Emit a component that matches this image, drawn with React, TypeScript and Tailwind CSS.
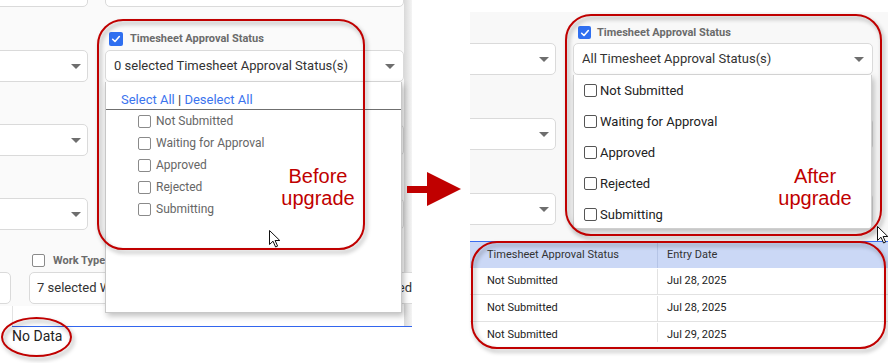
import React from "react";

function Caret() {
  return <span className="block w-0 h-0 border-x-[5px] border-x-transparent border-t-[5px] border-t-[#6e6e6e]" />;
}

function Select({ text = "", narrow = false }: { text?: string; narrow?: boolean }) {
  return (
    <div
      className={
        narrow
          ? "h-[32px] bg-white border border-[#dadada] rounded-[5px] flex items-center justify-end pr-[6px]"
          : "h-[32px] bg-white border border-[#dadada] rounded-[5px] flex items-center justify-between pl-[8px] pr-[8px] text-[13px] text-[#333]"
      }
    >
      {!narrow && <span className="whitespace-nowrap overflow-hidden">{text}</span>}
      <Caret />
    </div>
  );
}

function Checked({ small = false }: { small?: boolean }) {
  return (
    <span
      className={
        small
          ? "w-[13px] h-[13px] rounded-[2px] bg-[#2f6ff0] flex items-center justify-center shrink-0"
          : "w-[14px] h-[14px] rounded-[2px] bg-[#2f6ff0] flex items-center justify-center shrink-0"
      }
    >
      <svg viewBox="0 0 12 12" className="w-[10px] h-[10px]">
        <path d="M2 6.3 L4.8 9 L10 3" stroke="white" strokeWidth="1.9" fill="none" strokeLinecap="round" strokeLinejoin="round" />
      </svg>
    </span>
  );
}

function Box({ dark = false }: { dark?: boolean }) {
  return (
    <span
      className={
        dark
          ? "w-[13px] h-[13px] border border-[#555] rounded-[2px] bg-white shrink-0"
          : "w-[13px] h-[13px] border border-[#8a8a8a] rounded-[2px] bg-white shrink-0"
      }
    />
  );
}

function Cursor() {
  return (
    <svg viewBox="0 0 12 18" className="w-[12px] h-[18px]">
      <path d="M0.5 0.5 L0.5 14.5 L4 11.2 L6.6 17 L8.6 16.1 L6.1 10.5 L10.8 10.5 Z" fill="white" stroke="#111" strokeWidth="1" strokeLinejoin="round" />
    </svg>
  );
}

const items = ["Not Submitted", "Waiting for Approval", "Approved", "Rejected", "Submitting"];

function LeftPanel() {
  return (
    <div className="relative w-[412px] h-[363px] shrink-0 overflow-hidden bg-white">
      <div className="absolute left-[404px] top-0 w-[8px] h-[326px] bg-gradient-to-r from-[#d9d9d9] to-[#f4f4f4]" />
      <div className="relative h-[306px] bg-[#fafafa] flex flex-col w-[404px]">
        <div className="-ml-[30px] -mt-[25px] grid grid-cols-[118px_299px] gap-x-[17px]">
          <Select narrow />
          <Select />
        </div>
        {[0, 1, 2].map((i) => (
          <div key={i} className={i === 0 ? "-ml-[30px] mt-[25px] grid grid-cols-[118px_299px] gap-x-[17px]" : "-ml-[30px] mt-[24px] grid grid-cols-[118px_299px] gap-x-[17px]"}>
            <div className="flex flex-col">
              <div className="h-[18px]" />
              <Select narrow />
            </div>
            <div className="flex flex-col">
              <div className="h-[18px] flex items-start gap-[7px] pl-[4px]">
                {i === 0 && <Checked />}
                {i === 0 && (
                  <span className="text-[11px] leading-[14px] font-bold text-[#6b6b6b] whitespace-nowrap">Timesheet Approval Status</span>
                )}
              </div>
              <Select text={i === 0 ? "0 selected Timesheet Approval Status(s)" : ""} />
            </div>
          </div>
        ))}
        <div className="relative z-10 -ml-[30px] mt-[24px] grid grid-cols-[41px_401px] gap-x-[18px] w-[472px]">
          <div className="flex flex-col">
            <div className="h-[18px]" />
            <div className="h-[32px] bg-white border border-[#dadada] rounded-[5px]" />
          </div>
          <div className="flex flex-col">
            <div className="h-[18px] flex items-start gap-[8px] pl-[3px]">
              <Box />
              <span className="text-[11px] leading-[14px] font-bold text-[#6b6b6b] whitespace-nowrap">Work Type</span>
            </div>
            <div className="h-[32px] bg-white border border-[#dadada] rounded-[5px] flex items-center justify-between pl-[7px] pr-[17px] text-[13px] text-[#333]">
              <span className="whitespace-nowrap">7 selected Work Type(s)</span>
              <span>ed</span>
            </div>
          </div>
        </div>
      </div>
      <div className="h-[20px] ml-[12px] border-l border-[#e3e3e3]" />
      <div className="ml-[12px] border-t border-[#3366ee] pt-[1px] text-[14px] leading-[17px] text-[#222]">No Data</div>

      {/* open dropdown (before) */}
      <div className="absolute z-20 left-[105px] top-[82px] w-[297px] h-[231px] bg-white border-x border-b border-[#c8c8c8] shadow-[2px_3px_6px_rgba(0,0,0,0.25)] flex flex-col">
        <div className="h-[28px] border-b border-[#6f6f6f] pl-[15px] pt-[10px] text-[13px] leading-[15px] whitespace-nowrap">
          <span className="text-[#3b74ee]">Select All</span>
          <span className="text-[#333]"> | </span>
          <span className="text-[#3b74ee]">Deselect All</span>
        </div>
        <div className="flex flex-col">
          {items.map((t) => (
            <div key={t} className="h-[22px] pl-[32px] flex items-center gap-[5px] text-[12px] text-[#666]">
              <Box />
              <span>{t}</span>
            </div>
          ))}
        </div>
      </div>
    </div>
  );
}

const rows = [
  ["Not Submitted", "Jul 28, 2025"],
  ["Not Submitted", "Jul 28, 2025"],
  ["Not Submitted", "Jul 29, 2025"],
];

function RightPanel() {
  return (
    <div className="relative w-[418px] h-[363px] ml-[58px] shrink-0 overflow-hidden bg-white flex flex-col">
      <div className="h-[12px] shrink-0" />
      <div className="h-[229px] shrink-0 bg-[#f8f8f8] pt-[14px] flex flex-col gap-[26px]">
        {[0, 1, 2].map((i) => (
          <div key={i} className="-ml-[30px] grid grid-cols-[116px_300px] gap-x-[17px]">
            <div className="flex flex-col">
              <div className="h-[17px]" />
              <Select narrow />
            </div>
            <div className="flex flex-col">
              <div className="h-[17px] flex items-start gap-[6px] pl-[5px]">
                {i === 0 && <Checked small />}
                {i === 0 && (
                  <span className="text-[11px] leading-[13px] font-bold text-[#6b6b6b] whitespace-nowrap">Timesheet Approval Status</span>
                )}
              </div>
              <Select text={i === 0 ? "All Timesheet Approval Status(s)" : ""} />
            </div>
          </div>
        ))}
      </div>
      <div className="h-[101px] shrink-0 overflow-hidden bg-white border-t border-[#3a6cf0] text-[11px] text-[#222]">
        <div className="h-[26px] bg-[#cbd8f6] flex">
          <div className="w-[188px] pl-[17px] h-full flex items-center border-r border-[#b5c4e6] text-[#333]">Timesheet Approval Status</div>
          <div className="pl-[9px] flex items-center text-[#333]">Entry Date</div>
        </div>
        {rows.map((r, i) => (
          <div key={i} className="h-[27px] flex border-b border-[#e2e2e2] pt-[1px]">
            <div className="w-[188px] pl-[17px] h-full flex items-center border-r border-[#e2e2e2]">{r[0]}</div>
            <div className="pl-[9px] flex items-center">{r[1]}</div>
          </div>
        ))}
      </div>

      {/* open dropdown (after) */}
      <div className="absolute z-20 left-[103px] top-[75px] w-[299px] h-[154px] bg-white border-x border-b border-[#cfcfcf] rounded-b-[3px] shadow-[2px_3px_6px_rgba(0,0,0,0.25)] flex flex-col">
        {items.map((t) => (
          <div key={t} className="h-[31px] shrink-0 pl-[10px] flex items-center gap-[3px] text-[13px] text-[#222]">
            <Box dark />
            <span>{t}</span>
          </div>
        ))}
      </div>
    </div>
  );
}

export default function App() {
  return (
    <div className="relative w-[888px] h-[363px] bg-white overflow-hidden flex font-['Roboto',sans-serif]">
      <LeftPanel />
      <RightPanel />

      {/* annotations */}
      <div className="absolute z-30 left-[97px] top-[19px] w-[268px] h-[231px] border-2 border-[#c00000] rounded-[26px] drop-shadow-[2px_3px_2px_rgba(0,0,0,0.35)]" />
      <div className="absolute z-30 left-[565px] top-[14px] w-[317px] h-[222px] border-2 border-[#c00000] rounded-[26px] drop-shadow-[2px_3px_2px_rgba(0,0,0,0.35)]" />
      <div className="absolute z-30 left-[471px] top-[241px] w-[415px] h-[108px] border-2 border-[#c00000] rounded-[26px] drop-shadow-[2px_3px_2px_rgba(0,0,0,0.35)]" />
      <div className="absolute z-30 left-[1px] top-[317px] w-[71px] h-[40px] border-2 border-[#c00000] rounded-[50%] drop-shadow-[2px_3px_2px_rgba(0,0,0,0.35)]" />

      <div className="absolute z-30 left-[268px] top-[165px] w-[100px] text-center text-[20px] leading-[22px] text-[#c00000] font-['Liberation_Sans',Arial,sans-serif]">
        Before
        <br />
        upgrade
      </div>
      <div className="absolute z-30 left-[765px] top-[165px] w-[100px] text-center text-[20px] leading-[22px] text-[#c00000] font-['Liberation_Sans',Arial,sans-serif]">
        After
        <br />
        upgrade
      </div>

      <svg className="absolute z-30 left-[405px] top-[170px] w-[58px] h-[38px]" viewBox="0 0 58 38">
        <rect x="2" y="16" width="21" height="7" fill="#c00000" />
        <polygon points="22,2 56,19 22,36" fill="#c00000" />
      </svg>

      <div className="absolute z-40 left-[269px] top-[230px]">
        <Cursor />
      </div>
      <div className="absolute z-40 left-[877px] top-[226px]">
        <Cursor />
      </div>
    </div>
  );
}
